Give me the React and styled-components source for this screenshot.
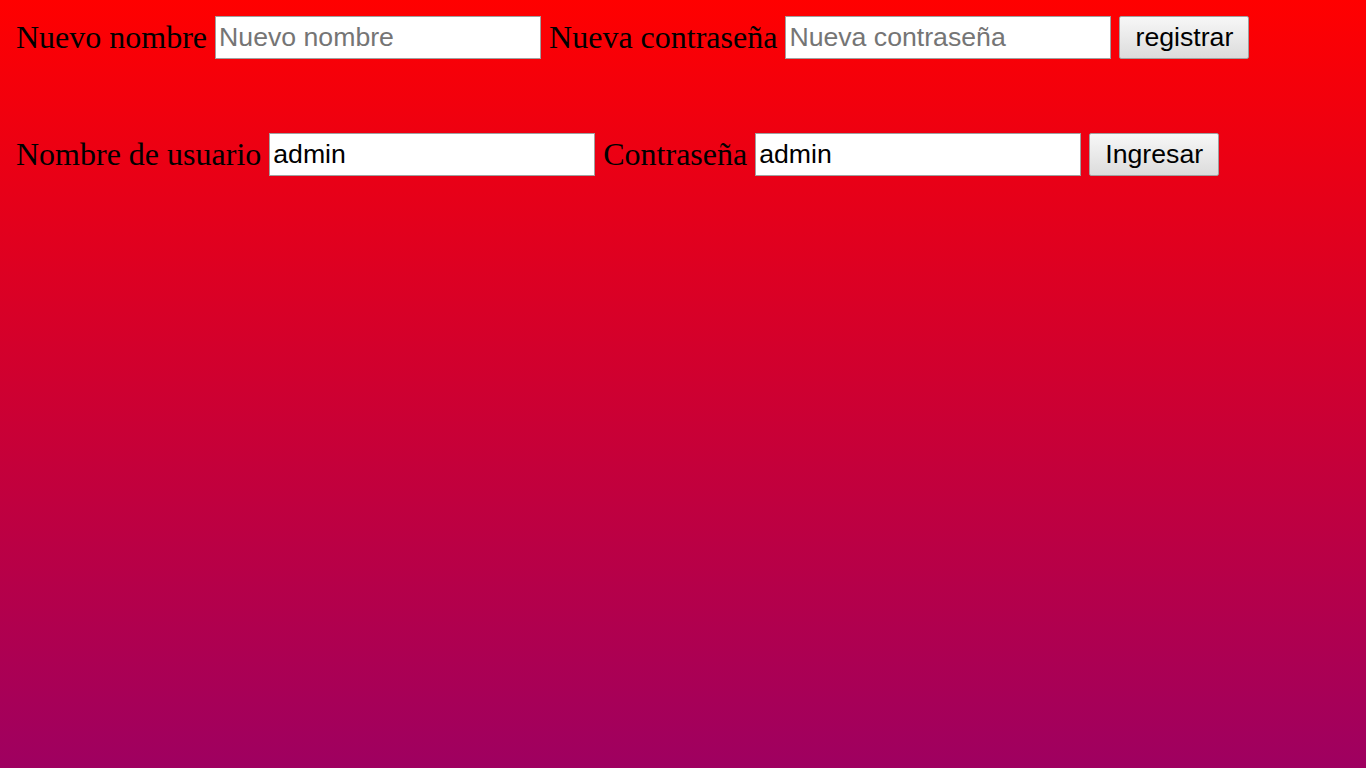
import React from 'react';
import styled, { createGlobalStyle } from 'styled-components';

const GlobalStyle = createGlobalStyle`
  html {
    overflow-y: scroll;
  }

  html, body {
    margin: 0;
    padding: 0;
  }
`;

const Page = () => (
  <Wrapper>
    <GlobalStyle />
    <Form onSubmit={(e) => e.preventDefault()}>
      <Label htmlFor="nuevo_nombre">Nuevo nombre</Label>
      <Input id="nuevo_nombre" type="text" placeholder="Nuevo nombre" />
      <Label htmlFor="nueva_pass">Nueva contraseña</Label>
      <Input id="nueva_pass" type="text" placeholder="Nueva contraseña" />
      <Button type="submit">registrar</Button>
    </Form>

    <Form onSubmit={(e) => e.preventDefault()}>
      <Label htmlFor="usuario">Nombre de usuario</Label>
      <Input id="usuario" type="text" defaultValue="admin" />
      <Label htmlFor="pass">Contraseña</Label>
      <Input id="pass" type="text" defaultValue="admin" />
      <Button type="submit">Ingresar</Button>
    </Form>
  </Wrapper>
);

const Wrapper = styled.div`
  min-height: 2030px;
  box-sizing: border-box;
  padding: 16px;
  background: linear-gradient(to bottom, #ff0000, #0000ff);
  display: flex;
  flex-direction: column;
  gap: 74px;
`;

const Form = styled.form`
  display: flex;
  align-items: center;
  gap: 8px;
  margin: 0;
`;

const Label = styled.label`
  font-family: 'Liberation Serif', 'Times New Roman', serif;
  font-size: 32px;
  line-height: 1;
  margin-top: -2px;
  color: #000;
  white-space: nowrap;
`;

const Input = styled.input`
  box-sizing: border-box;
  width: 326px;
  height: 43px;
  margin: 0;
  padding: 0 3px;
  border: 1px solid #a0a0a0;
  border-radius: 0;
  background: #fff;
  font-family: 'Liberation Sans', Arial, sans-serif;
  font-size: 26.67px;
  color: #000;
  outline: none;

  &::placeholder {
    color: #757575;
  }
`;

const Button = styled.button`
  box-sizing: border-box;
  width: 130px;
  height: 43px;
  margin: 0;
  padding: 0;
  border: 1px solid #a0a0a0;
  border-radius: 2px;
  background: linear-gradient(to bottom, #f7f7f7, #dcdcdc);
  font-family: 'Liberation Sans', Arial, sans-serif;
  font-size: 26.67px;
  color: #000;
  cursor: pointer;
`;

export default Page;
